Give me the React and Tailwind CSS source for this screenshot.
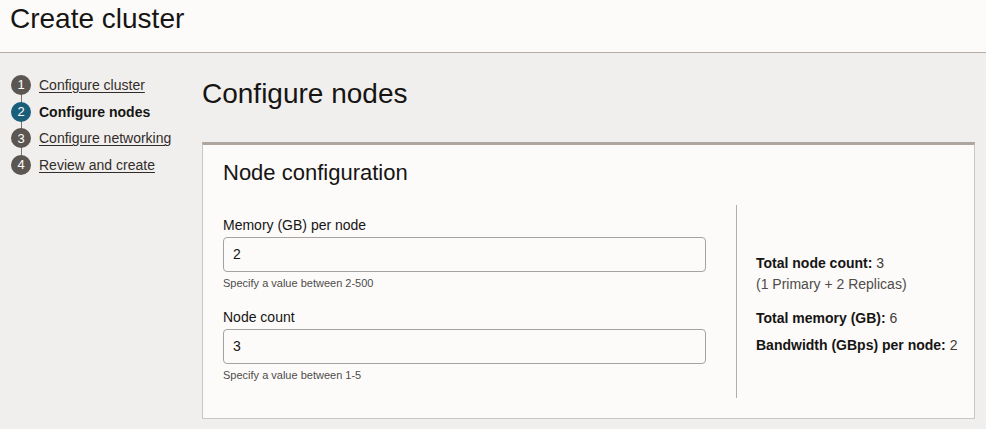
import React from 'react'

const steps = [
  { n: 1, label: 'Configure cluster' },
  { n: 2, label: 'Configure nodes', active: true },
  { n: 3, label: 'Configure networking' },
  { n: 4, label: 'Review and create' },
]

const Field = ({ label, value, help, className = '' }) => (
  <div className={className}>
    <label className="block text-[14px] leading-[20px] text-[#161513]">{label}</label>
    <div className="mt-[2px] h-[35px] w-full rounded-[4px] border border-[#a7a29d] bg-[#fcfbfa] pl-[9px] flex items-center text-[14px] text-[#161513]">
      {value}
    </div>
    <p className="mt-[3px] text-[11px] leading-[16px] text-[#4f4c49]">{help}</p>
  </div>
)

const App = () => {
  return (
    <div
      className="w-[986px] h-[429px] overflow-hidden bg-[#f1efed] text-[#161513]"
      style={{ fontFamily: '"Liberation Sans", Arial, sans-serif' }}
    >
      {/* Header */}
      <header className="h-[53px] border-b border-[#b5ada6] bg-[#fcfbfa] pl-[10px] pt-[2.5px]">
        <h1 className="text-[28px] leading-[32px] font-normal">Create cluster</h1>
      </header>

      <div className="flex">
        {/* Steps */}
        <nav className="w-[202px] shrink-0 pl-[11px] pt-[18.67px]">
          <ul>
            {steps.map((s, i) => (
              <li key={s.n} className="relative flex h-[26.67px] items-center">
                {i < steps.length - 1 && (
                  <span className="absolute left-[9.5px] top-[13px] h-[26.67px] w-px bg-[#7a736d]" />
                )}
                <span
                  className={`relative z-10 flex h-[20px] w-[20px] items-center justify-center rounded-full text-[13px] text-white ${
                    s.active ? 'bg-[#1a5f7a]' : 'bg-[#5b5651]'
                  }`}
                >
                  {s.n}
                </span>
                <span
                  className={`ml-[8px] text-[14px] leading-[20px] ${
                    s.active ? 'font-bold text-[#161513]' : 'underline text-[#312d2a] underline-offset-2'
                  }`}
                >
                  {s.label}
                </span>
              </li>
            ))}
          </ul>
        </nav>

        {/* Main */}
        <main className="min-w-0 flex-1 pr-[11px] pt-[25px]">
          <h2 className="text-[28px] leading-[32px] font-normal">Configure nodes</h2>

          <section className="mt-[32px] border border-t-[3px] border-[#cbc6c1] border-t-[#ada59e] bg-[#fcfbfa] px-[20px] pt-[15px] pb-[20px]">
            <h3 className="text-[22px] leading-[26px] font-normal">Node configuration</h3>

            <div className="mt-[19px] flex h-[193px]">
              <div className="w-[513px] shrink-0 pr-[30px] pt-[10px]">
                <Field label="Memory (GB) per node" value="2" help="Specify a value between 2-500" />
                <Field className="mt-[16px]" label="Node count" value="3" help="Specify a value between 1-5" />
              </div>

              <div className="w-px bg-[#b5ada6]" />

              <div className="min-w-0 flex-1 whitespace-nowrap pl-[19px] pt-[48px] text-[14px] leading-[21px]">
                <p>
                  <span className="font-bold">Total node count:</span>{' '}
                  <span className="text-[#3f3b38]">3</span>
                </p>
                <p className="text-[#4f4c49]">(1 Primary + 2 Replicas)</p>
                <p className="mt-[13px]">
                  <span className="font-bold">Total memory (GB):</span>{' '}
                  <span className="text-[#3f3b38]">6</span>
                </p>
                <p className="mt-[6px]">
                  <span className="font-bold">Bandwidth (GBps) per node:</span>{' '}
                  <span className="text-[#3f3b38]">2</span>
                </p>
              </div>
            </div>
          </section>
        </main>
      </div>
    </div>
  )
}

export default App
